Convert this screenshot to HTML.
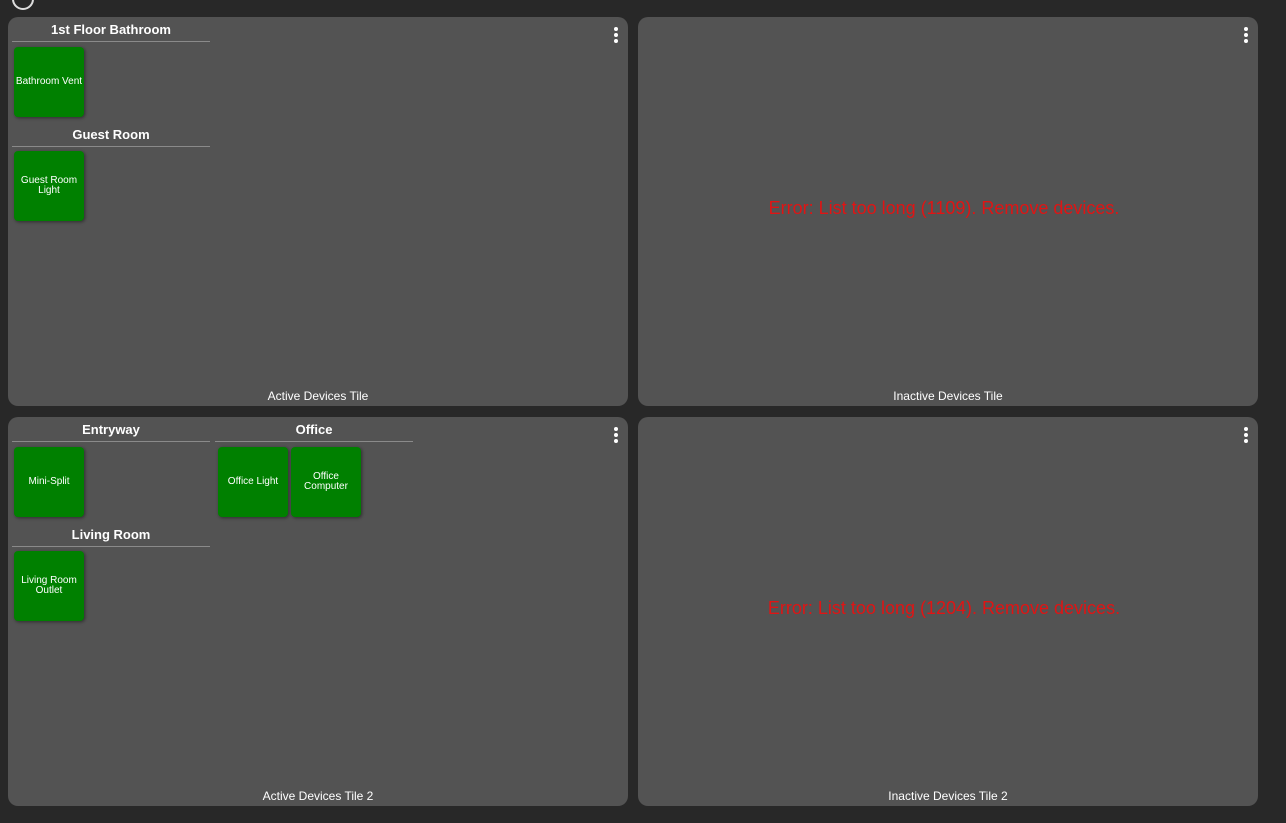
<!DOCTYPE html>
<html><head><style>
body{margin:0;width:1286px;height:823px;background:#282828;font-family:"Liberation Sans",sans-serif;position:relative;overflow:hidden}
.p{position:absolute;width:620px;height:389px;background:#535353;border-radius:10px}
.dots{position:absolute;right:10px;top:10px;width:4px}
.dots i{display:block;width:4px;height:4px;border-radius:50%;background:#fff;margin-bottom:2px}
.ft{position:absolute;left:0;right:0;bottom:3px;text-align:center;color:#fff;font-size:12px}
.err{position:absolute;left:0;right:8px;top:181px;text-align:center;color:#e01414;font-size:18px}
.sec{position:absolute;width:198px}
.sec h{display:block;text-align:center;color:#fff;font-weight:bold;font-size:13px;height:16px;line-height:16px;border-bottom:1px solid #8a8a8a;padding-bottom:3px;margin-top:5px}
.t{position:absolute;width:70px;height:70px;background:#008000;border-radius:4px;box-shadow:1px 1px 3px rgba(0,0,0,.45);color:#fff;font-size:10px;display:flex;align-items:center;justify-content:center;text-align:center;line-height:10px}
</style></head><body>
<div style="position:absolute;left:12px;top:-12px;width:18px;height:18px;border:2px solid #ddd;border-radius:50%"></div>
<div class="p" style="left:8px;top:17px">
 <div class="dots"><i></i><i></i><i></i></div>
 <div class="sec" style="left:4px;top:0"><h>1st Floor Bathroom</h><div class="t" style="left:2px;top:30px">Bathroom Vent</div></div>
 <div class="sec" style="left:4px;top:105px"><h>Guest Room</h><div class="t" style="left:2px;top:29px">Guest Room<br>Light</div></div>
 <div class="ft">Active Devices Tile</div>
</div>
<div class="p" style="left:638px;top:17px">
 <div class="dots"><i></i><i></i><i></i></div>
 <div class="err">Error: List too long (1109). Remove devices.</div>
 <div class="ft">Inactive Devices Tile</div>
</div>
<div class="p" style="left:8px;top:417px">
 <div class="dots"><i></i><i></i><i></i></div>
 <div class="sec" style="left:4px;top:0"><h>Entryway</h><div class="t" style="left:2px;top:30px">Mini-Split</div></div>
 <div class="sec" style="left:207px;top:0"><h>Office</h><div class="t" style="left:3px;top:30px">Office Light</div><div class="t" style="left:76px;top:30px">Office<br>Computer</div></div>
 <div class="sec" style="left:4px;top:105px"><h>Living Room</h><div class="t" style="left:2px;top:29px">Living Room<br>Outlet</div></div>
 <div class="ft">Active Devices Tile 2</div>
</div>
<div class="p" style="left:638px;top:417px">
 <div class="dots"><i></i><i></i><i></i></div>
 <div class="err">Error: List too long (1204). Remove devices.</div>
 <div class="ft">Inactive Devices Tile 2</div>
</div>
</body></html>
